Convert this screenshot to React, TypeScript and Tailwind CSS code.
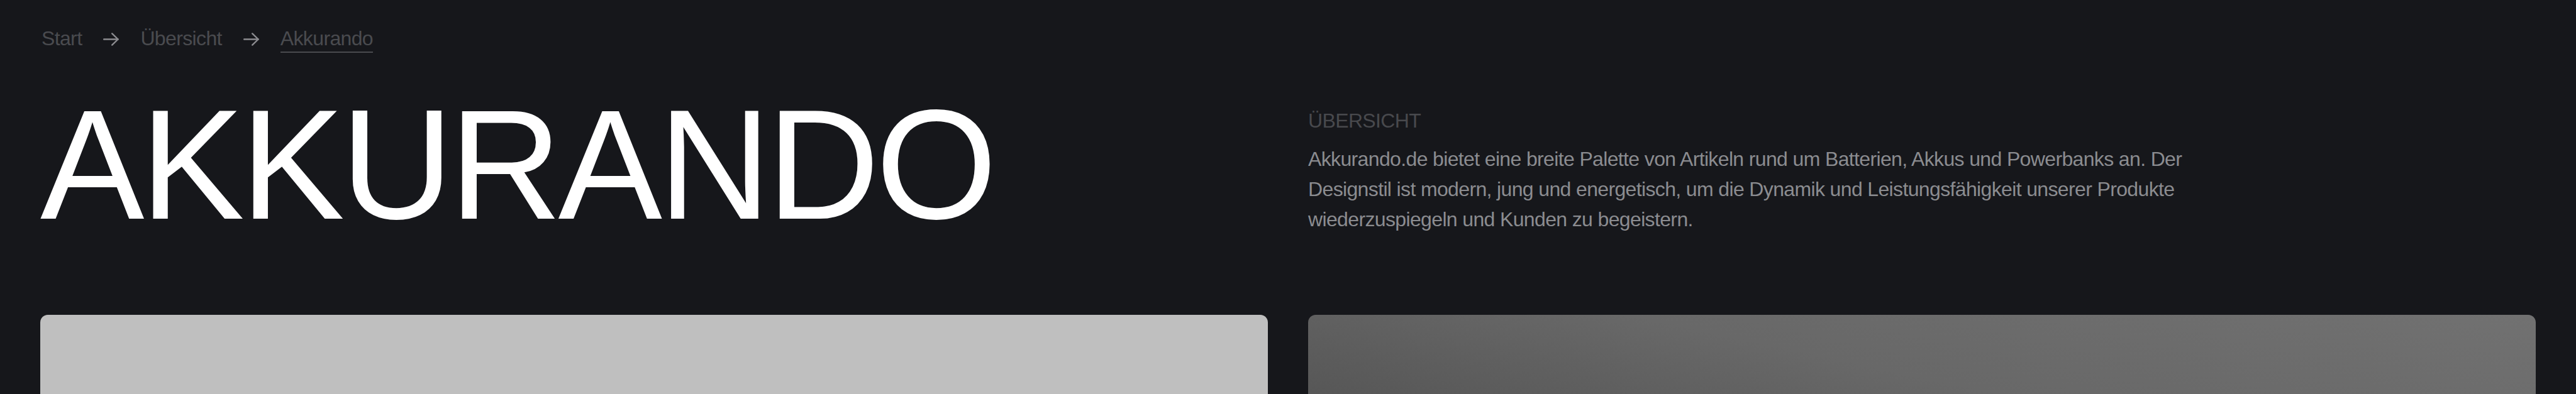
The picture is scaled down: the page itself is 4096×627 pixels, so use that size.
const crumbs = ["Start", "Übersicht"];

function Arrow() {
  return (
    <svg
      width="25"
      height="21"
      viewBox="0 0 25 21"
      fill="none"
      stroke="#8c8c90"
      strokeWidth="2.4"
      strokeLinecap="round"
      strokeLinejoin="round"
      className="mt-[11px] shrink-0"
    >
      <path d="M1.2 10.5H23.6" />
      <path d="M14.2 1.4L23.6 10.5L14.2 19.6" />
    </svg>
  );
}

export default function App() {
  return (
    <div className="min-h-screen bg-[#16171b] px-16 pb-16 font-['Liberation_Sans',Arial,sans-serif]">
      <nav className="flex items-start gap-[34px] pl-[2px] pt-[41px] text-[32px] leading-[40px] tracking-[-0.02em] text-[#4a4b4f]">
        {crumbs.map((c) => (
          <div key={c} className="flex items-start gap-[34px]">
            <a href="#">{c}</a>
            <Arrow />
          </div>
        ))}
        <a href="#" className="border-b-2 border-[#4a4b4f] pb-px">
          Akkurando
        </a>
      </nav>

      <header className="mt-[54px] grid grid-cols-2 gap-16">
        <h1 className="text-[248px] font-normal leading-none tracking-[-0.025em] text-white">
          AKKURANDO
        </h1>
        <div className="pt-[30px] text-[32px] leading-[48px] tracking-[-0.02em]">
          <p className="text-[#48494d]">ÜBERSICHT</p>
          <p className="mt-[13px] max-w-[1460px] text-[#8b8c90]">
            Akkurando.de bietet eine breite Palette von Artikeln rund um
            Batterien, Akkus und Powerbanks an. Der Designstil ist modern, jung
            und energetisch, um die Dynamik und Leistungsfähigkeit unserer
            Produkte wiederzuspiegeln und Kunden zu begeistern.
          </p>
        </div>
      </header>

      <section className="mt-[115px] grid grid-cols-2 gap-16">
        <div className="h-[1100px] rounded-[12px] bg-[#bfbfbf]" />
        <div className="h-[1100px] rounded-[12px] bg-[linear-gradient(192deg,#717171_0px,#686868_300px,#4a4a4a_700px,#2e2e2e_100%)]" />
      </section>
    </div>
  );
}
